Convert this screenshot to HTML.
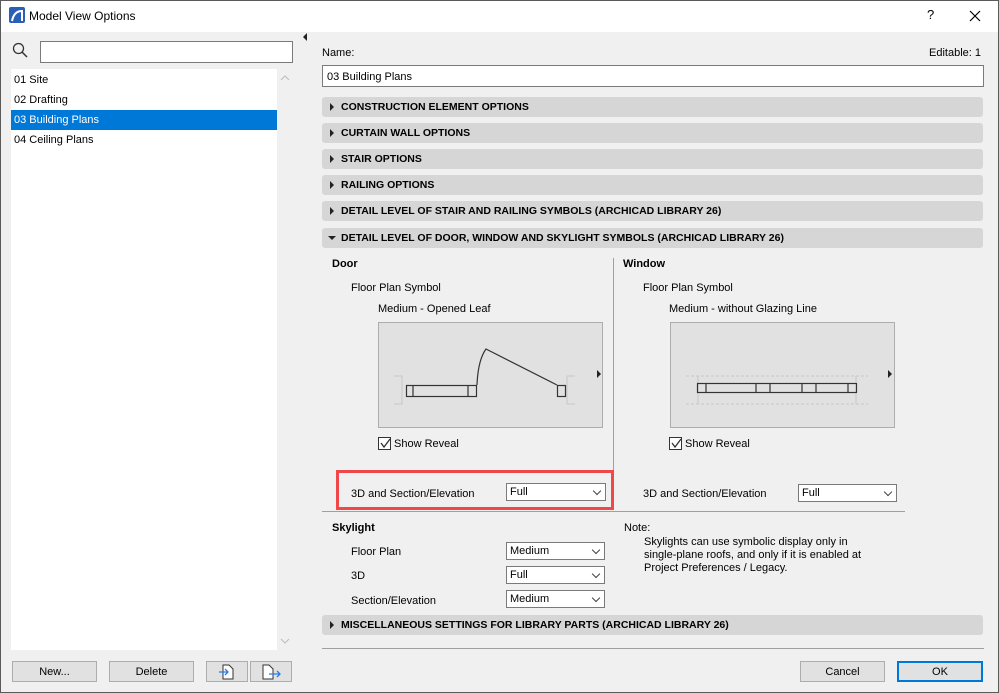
<!DOCTYPE html>
<html><head><style>
*{box-sizing:border-box;margin:0;padding:0}
body{width:999px;height:693px;background:#f0f0f0;font-family:"Liberation Sans",sans-serif;font-size:11px;color:#000;position:relative;overflow:hidden}
.a{position:absolute;white-space:nowrap}
.inp{position:absolute;background:#fff;border:1px solid #7a7a7a}
.bar{position:absolute;left:322px;width:661px;height:20px;background:#d6d6d6;border-radius:3px;font-weight:bold;font-size:10.5px;line-height:21px;padding-left:19px}
.bar:before{content:"";position:absolute;left:8px;top:6px;border-left:4px solid #222;border-top:4px solid transparent;border-bottom:4px solid transparent}
.bar.o:before{left:6px;top:8px;border-top:4px solid #222;border-left:4px solid transparent;border-right:4px solid transparent;border-bottom:none}
.btn{position:absolute;height:21px;background:#e1e1e1;border:1px solid #adadad;text-align:center;line-height:20px}
.sel{position:absolute;background:#fff;border:1px solid #7a7a7a;height:18px;line-height:17px;padding-left:3px}
.sel:after{content:"";position:absolute;right:5px;top:4px;width:5px;height:5px;border-right:1px solid #444;border-bottom:1px solid #444;transform:rotate(45deg)}
.box{position:absolute;background:#e1e1e1;border:1px solid #adadad}
.cb{position:absolute;width:13px;height:13px;border:1px solid #333;background:#fff}
.li{position:absolute;left:11px;width:266px;height:20px;line-height:21px;padding-left:3px}
</style></head><body>
<div class="a" style="left:0;top:0;width:999px;height:32px;background:#fff"></div>
<div class="a" style="left:0;top:0;width:999px;height:693px;border:1px solid #5a5a5a"></div>
<svg class="a" style="left:9px;top:7px" width="16" height="16"><rect width="16" height="16" rx="2" fill="#2a5fb8"/><path d="M3 14 Q5 4 13 4 L13 14" fill="none" stroke="#fff" stroke-width="2"/></svg>
<div class="a" style="left:29px;top:9px;font-size:12px">Model View Options</div>
<div class="a" style="left:927px;top:7px;font-size:13px">?</div>
<svg class="a" style="left:969px;top:10px" width="12" height="12"><path d="M1 1L11 11M11 1L1 11" stroke="#000" stroke-width="1.2"/></svg>
<svg class="a" style="left:12px;top:42px" width="16" height="16"><circle cx="6.5" cy="6.5" r="5" fill="none" stroke="#333" stroke-width="1.3"/><path d="M10 10L15 15" stroke="#333" stroke-width="1.5"/></svg>
<div class="inp" style="left:40px;top:41px;width:253px;height:22px"></div>
<div class="a" style="left:11px;top:69px;width:266px;height:581px;background:#fff"></div>
<div class="li" style="top:70px">01 Site</div>
<div class="li" style="top:90px">02 Drafting</div>
<div class="li" style="top:110px;background:#0078d7;color:#fff">03 Building Plans</div>
<div class="li" style="top:130px">04 Ceiling Plans</div>
<svg class="a" style="left:280px;top:74px" width="10" height="8"><path d="M1 6L5 2L9 6" fill="none" stroke="#bbb"/></svg>
<svg class="a" style="left:280px;top:637px" width="10" height="8"><path d="M1 2L5 6L9 2" fill="none" stroke="#bbb"/></svg>
<div class="a" style="left:303px;top:33px;border-right:4px solid #222;border-top:4px solid transparent;border-bottom:4px solid transparent"></div>
<div class="btn" style="left:12px;top:661px;width:85px">New...</div>
<div class="btn" style="left:109px;top:661px;width:85px">Delete</div>
<div class="btn" style="left:206px;top:661px;width:42px"><svg width="20" height="18" style="margin-top:1px"><path d="M6 2H12L16 6V16H6Z" fill="#fff" stroke="#333"/><path d="M2 9H11M8 6L11 9L8 12" fill="none" stroke="#2a7de1" stroke-width="1.3"/></svg></div>
<div class="btn" style="left:250px;top:661px;width:42px"><svg width="22" height="18" style="margin-top:1px"><path d="M3 2H9L13 6V16H3Z" fill="#fff" stroke="#333"/><path d="M9 11H20M17 8L20 11L17 14" fill="none" stroke="#2a7de1" stroke-width="1.3"/></svg></div>

<div class="a" style="left:322px;top:47px">Name:</div>
<div class="a" style="left:929px;top:47px">Editable: 1</div>
<div class="inp" style="left:322px;top:65px;width:662px;height:22px;padding:5px 4px">03 Building Plans</div>
<div class="bar" style="top:97px">CONSTRUCTION ELEMENT OPTIONS</div>
<div class="bar" style="top:123px">CURTAIN WALL OPTIONS</div>
<div class="bar" style="top:149px">STAIR OPTIONS</div>
<div class="bar" style="top:175px">RAILING OPTIONS</div>
<div class="bar" style="top:201px">DETAIL LEVEL OF STAIR AND RAILING SYMBOLS (ARCHICAD LIBRARY 26)</div>
<div class="bar o" style="top:228px">DETAIL LEVEL OF DOOR, WINDOW AND SKYLIGHT SYMBOLS (ARCHICAD LIBRARY 26)</div>

<div class="a" style="left:332px;top:258px;font-weight:bold">Door</div>
<div class="a" style="left:351px;top:282px">Floor Plan Symbol</div>
<div class="a" style="left:378px;top:303px">Medium - Opened Leaf</div>
<div class="box" style="left:378px;top:322px;width:225px;height:106px"></div>
<div class="cb" style="left:378px;top:437px"></div>
<div class="a" style="left:394px;top:438px">Show Reveal</div>
<div class="a" style="left:613px;top:258px;width:1px;height:252px;background:#a0a0a0"></div>
<div class="a" style="left:336px;top:470px;width:278px;height:40px;border:3px solid #f04848"></div>
<div class="a" style="left:351px;top:488px">3D and Section/Elevation</div>
<div class="sel" style="left:506px;top:483px;width:100px">Full</div>

<div class="a" style="left:623px;top:258px;font-weight:bold">Window</div>
<div class="a" style="left:643px;top:282px">Floor Plan Symbol</div>
<div class="a" style="left:669px;top:303px">Medium - without Glazing Line</div>
<div class="box" style="left:670px;top:322px;width:225px;height:106px"></div>
<div class="cb" style="left:669px;top:437px"></div>
<div class="a" style="left:685px;top:438px">Show Reveal</div>
<div class="a" style="left:643px;top:488px">3D and Section/Elevation</div>
<div class="sel" style="left:798px;top:484px;width:99px">Full</div>

<svg class="a" style="left:0;top:0" width="999" height="693">
<g fill="none" stroke="#c8c8c8"><path d="M394 376H402V404H394M575 376H567V404H575"/></g>
<g fill="none" stroke="#333" stroke-width="1.2"><rect x="406.5" y="385.5" width="70" height="11"/><path d="M413 385V397M468 385V397"/><rect x="557.5" y="385.5" width="8" height="11"/><path d="M477 385Q478 360 486 349L557 385"/></g>
<path d="M597 370V378L601 374Z" fill="#222"/>
<g fill="none" stroke="#c8c8c8" stroke-dasharray="3 2"><path d="M686 376H868M686 404H868"/></g>
<path d="M698 376V404M856 376V404" stroke="#c8c8c8"/>
<g fill="none" stroke="#333" stroke-width="1.2"><rect x="697.5" y="383.5" width="159" height="9"/><path d="M706 383V393M756 383V393M770 383V393M802 383V393M816 383V393M848 383V393"/></g>
<path d="M888 370V378L892 374Z" fill="#222"/>
<path d="M381 443L384 447L390 439" fill="none" stroke="#333" stroke-width="1.3"/>
<path d="M672 443L675 447L681 439" fill="none" stroke="#333" stroke-width="1.3"/>
</svg>

<div class="a" style="left:322px;top:511px;width:583px;height:1px;background:#a0a0a0"></div>
<div class="a" style="left:332px;top:522px;font-weight:bold">Skylight</div>
<div class="a" style="left:351px;top:546px">Floor Plan</div>
<div class="sel" style="left:506px;top:542px;width:99px">Medium</div>
<div class="a" style="left:351px;top:570px">3D</div>
<div class="sel" style="left:506px;top:566px;width:99px">Full</div>
<div class="a" style="left:351px;top:595px">Section/Elevation</div>
<div class="sel" style="left:506px;top:590px;width:99px">Medium</div>
<div class="a" style="left:624px;top:522px">Note:</div>
<div class="a" style="left:644px;top:536px;line-height:13px">Skylights can use symbolic display only in<br>single-plane roofs, and only if it is enabled at<br>Project Preferences / Legacy.</div>
<div class="bar" style="top:615px">MISCELLANEOUS SETTINGS FOR LIBRARY PARTS (ARCHICAD LIBRARY 26)</div>
<div class="a" style="left:322px;top:648px;width:662px;height:1px;background:#a0a0a0"></div>
<div class="btn" style="left:800px;top:661px;width:85px">Cancel</div>
<div class="btn" style="left:897px;top:661px;width:86px;border:2px solid #0078d7;line-height:18px">OK</div>
</body></html>
